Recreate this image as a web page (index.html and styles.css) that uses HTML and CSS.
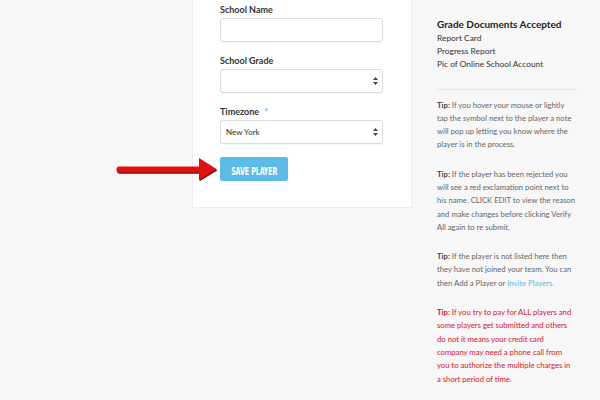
FILE: index.html
```html
<!DOCTYPE html>
<html lang="en">
<head>
    <meta charset="UTF-8">
    <title>Edit Player</title>
    <link rel="stylesheet" href="styles.css">
</head>
<body>
    <div class="page">
        <div class="card">
            <label class="field-label">School Name</label>
            <input type="text" class="field">

            <label class="field-label">School Grade</label>
            <div class="select-wrap">
                <select class="field"><option></option></select>
                <svg class="updown" width="5" height="8" viewBox="0 0 5 8"><path d="M2.5 0 L5 3 H0 Z M2.5 8 L5 5 H0 Z" fill="#444"/></svg>
            </div>

            <label class="field-label">Timezone <span class="req">*</span></label>
            <div class="select-wrap">
                <select class="field"><option>New York</option></select>
                <svg class="updown" width="5" height="8" viewBox="0 0 5 8"><path d="M2.5 0 L5 3 H0 Z M2.5 8 L5 5 H0 Z" fill="#444"/></svg>
            </div>

            <div class="actions">
                <button class="save-btn"><span class="btn-text">SAVE PLAYER</span></button>
                <svg class="arrow" width="104" height="26" viewBox="0 0 104 26">
                    <path d="M4 11 H84 V2.5 L102 13.5 L84 24.5 V17 H4 Q1.5 17 1.5 14 Q1.5 11 4 11 Z" fill="#7a0a0a" transform="translate(0.6 0.8)"/>
                    <path d="M4 10.5 H84 V2 L101.5 13 L84 24 V16.5 H4 Q1.5 16.5 1.5 13.5 Q1.5 10.5 4 10.5 Z" fill="#e0120f"/>
                </svg>
            </div>
        </div>

        <div class="sidebar">
            <h4>Grade Documents Accepted</h4>
            <ul class="docs">
                <li>Report Card</li>
                <li>Progress Report</li>
                <li>Pic of Online School Account</li>
            </ul>
            <hr>
            <p class="tip"><b>Tip:</b> If you hover your mouse or lightly tap the symbol next to the player a note will pop up letting you know where the player is in the process.</p>
            <p class="tip"><b>Tip:</b> If the player has been rejected you will see a red exclamation point next to his name. CLICK EDIT to view the reason and make changes before clicking Verify All again to re submit.</p>
            <p class="tip"><b>Tip:</b> If the player is not listed here then they have not joined your team. You can then Add a Player or <a href="#">Invite Players.</a></p>
            <p class="tip warn"><b>Tip:</b> If you try to pay for ALL players and some players get submitted and others do not it means your credit card company may need a phone call from you to authorize the multiple charges in a short period of time.</p>
        </div>
    </div>
</body>
</html>
```

FILE: styles.css
```css
body {
    margin: 0;
    background: #f7f7f7;
    font-family: Lato, "Open Sans", sans-serif;
    color: #333;
}
.page {
    display: flex;
    align-items: flex-start;
    height: 400px;
    overflow: hidden;
}
.card {
    margin-left: 192px;
    width: 163px;
    padding: 4px 28px 26px 27px;
    background: #fff;
    border: 1px solid #eee;
    border-top: none;
    display: flex;
    flex-direction: column;
}
.field-label {
    font-size: 9px;
    line-height: 12px;
    font-weight: bold;
    color: #333;
    margin-bottom: 2px;
}
.req {
    color: #5bbcea;
    margin-left: 3px;
}
.field {
    box-sizing: border-box;
    display: block;
    width: 163px;
    height: 24px;
    border: 1px solid #dcdcdc;
    border-radius: 3px;
    background: #fff;
    margin: 0 0 13px 0;
    padding: 0 5px;
    font-family: Lato, sans-serif;
    font-size: 8px;
    color: #333;
    box-shadow: 0 1px 1px rgba(0, 0, 0, 0.04);
}
select.field {
    appearance: none;
    -webkit-appearance: none;
}
.select-wrap {
    position: relative;
}
.updown {
    position: absolute;
    right: 5px;
    top: 8px;
}
.actions {
    position: relative;
}
.save-btn {
    display: block;
    width: 68px;
    height: 24px;
    border: none;
    border-radius: 2px;
    background: #5bbcea;
    color: #fff;
    padding: 0;
}
.btn-text {
    display: inline-block;
    font-family: "DejaVu Sans Condensed", sans-serif;
    font-stretch: condensed;
    font-weight: bold;
    font-size: 8px;
    letter-spacing: -0.1px;
    transform: scale(0.88, 1.2);
}
.arrow {
    position: absolute;
    left: -105px;
    top: -1px;
}
.sidebar {
    margin-left: 25px;
    width: 140px;
    padding-top: 18px;
}
.sidebar h4 {
    margin: 0 0 1.5px 0;
    font-size: 10px;
    line-height: 12px;
    font-weight: bold;
    color: #222;
}
.docs {
    list-style: none;
    margin: 0;
    padding: 0;
    font-size: 8.4px;
    line-height: 13px;
    color: #333;
}
.sidebar hr {
    border: none;
    border-top: 1px solid #e6e6e6;
    margin: 18px 0 9px 0;
}
.tip {
    margin: 0 0 16px 0;
    line-height: 13.3px;
    font-size: 7.7px;
    color: #666;
}
.tip b {
    color: #444;
}
.tip a {
    color: #5bbcea;
    text-decoration: none;
}
.tip.warn {
    max-width: 135px;
}
.tip.warn, .tip.warn b {
    color: #d9141e;
}
```
